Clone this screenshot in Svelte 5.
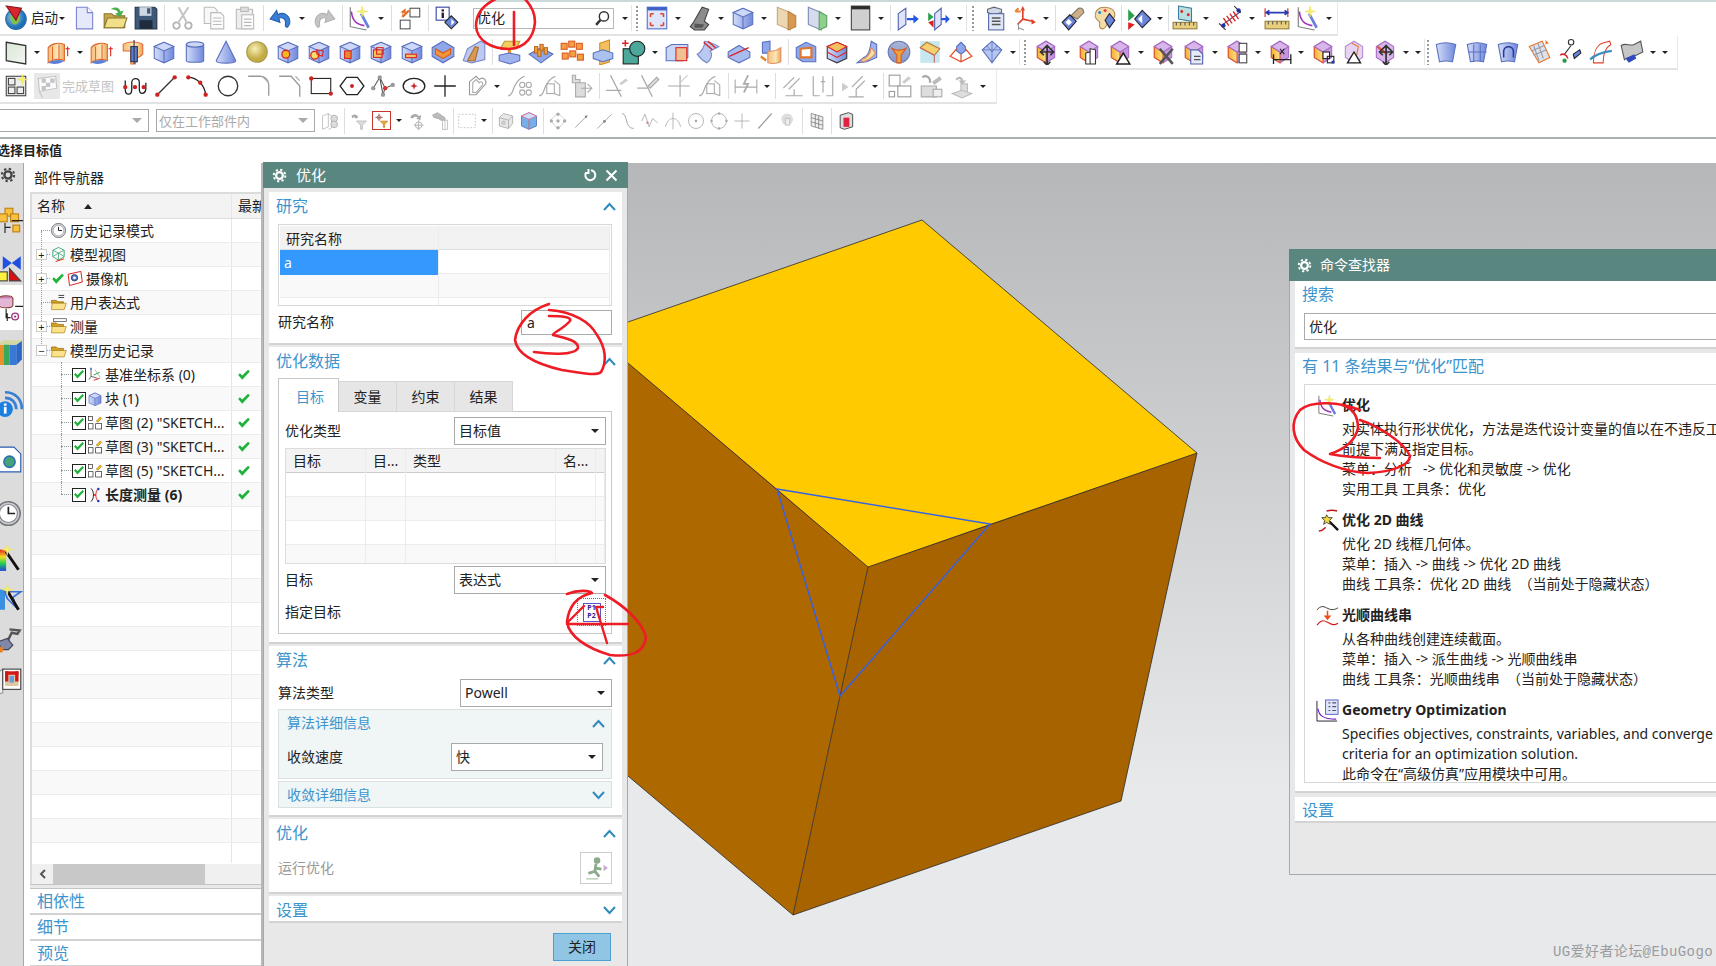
<script>
	// small svg helpers, everything is on a 24x24 box
	const P = (d, f = 'none', s = 'none', w = 1) => `<path d="${d}" fill="${f}" stroke="${s}" stroke-width="${w}"/>`
	const C = (x, y, r, f = 'none', s = 'none', w = 1) => `<circle cx="${x}" cy="${y}" r="${r}" fill="${f}" stroke="${s}" stroke-width="${w}"/>`
	const R = (x, y, w, h, f = 'none', s = 'none') => `<rect x="${x}" y="${y}" width="${w}" height="${h}" fill="${f}" stroke="${s}"/>`

	const cube = P('M3 7l9-4 9 4v11l-9 4-9-4z', 'url(#gBlue)', '#5a70bd') + P('M3 7l9 4 9-4-9-4z', '#cdd8f8', '#5a70bd') + P('M12 11v11', 'none', '#5a70bd')
	const hex = P('M4 7l8-5 8 5v10l-8 5-8-5z', '#c596dc', '#a56cc6') + P('M4 7l8 5v10l-8-5z', 'url(#gYel)', '#e0572a') + P('M4 7l8-5 8 5-8 5z', '#d9b6ea', '#a56cc6')
	const sheet = (l = '') => P('M3 5c6-2 12-2 18 0l-3 16c-4-1-8-1-12 0z', 'url(#gBlue)', '#5a70bd') + l
	const arrows4 = P('M16 9l3 3-3 3M10 15l-3-3 3-3M10 21l3 3 3-3M10 9l3-3 3 3M7 12h12M13 6v18', 'none', '#333', 1.6)
	const star = (x, y) => P(`M${x} ${y - 5}l1 4 4 1-4 1-1 4-1-4-4-1 4-1z`, '#f6f06a', '#e8e060', 0.5)
	const sheetLines = 'M9 5v16M15 5v16M4 12h17'

	const ICONS = {
		tick: P('M2 12l3-3 4 4L19 3l3 3L9 20z', '#1fb33a'),
		logo: C(12, 13, 9.5, 'url(#gGlobe)', '#2c6ea8') + P('M7 9c3-2 4 3 7 1s2 7-2 8-6-5-5-9z', '#7fbf4a') + P('M3 1l14 2-5 11z', '#d8262c', '#8a1216'),
		doc: P('M5 2h10l5 5v15H5z', '#e6e9fb', '#7b83cc') + P('M15 2v5h5', '#fff', '#7b83cc'),
		folder: P('M2 8h7l2 2h10v11H2z', '#c8a94a', '#8a7430') + P('M5 12h18l-3 9H2z', '#f1df8a', '#8a7430') + P('M8 4c4-3 8-2 9 2l3-1-3 6-5-3 3-1c-1-2-4-3-7-3z', '#4aae4a'),
		save: P('M2 2h18l2 2v18H2z', '#3f5878', '#23344a') + R(6, 2, 11, 8, '#cfd8e2') + R(6, 14, 12, 8, '#1f2c3e') + R(13, 3, 3, 5, '#3f5878'),
		scissors: C(6, 19, 3, 'none', '#666', 1.6) + C(17, 19, 3, 'none', '#666', 1.6) + P('M7 17L17 2M16 17L8 2', 'none', '#888', 1.8),
		copy: P('M3 2h9l3 3v12H3z', '#eee', '#777') + P('M9 7h9l3 3v12H9z', '#f6f6f6', '#777') + P('M11 12h8M11 15h8M11 18h8', 'none', '#777'),
		paste: R(4, 4, 15, 18, '#ddd', '#777') + R(8, 2, 7, 4, '#bbb', '#777') + R(9, 9, 11, 13, '#f8f8f8', '#777') + P('M11 13h7M11 16h7M11 19h7', 'none', '#777'),
		undo: P('M20 17c1-8-6-11-11-8l-1-4-6 8 9 3-1-4c4-1 7 1 6 7 1 3 3 1 4-2z', '#3a7fd6', '#245fae'),
		redo: P('M4 17c-1-8 6-11 11-8l1-4 6 8-9 3 1-4c-4-1-7 1-6 7-1 3-3 1-4-2z', '#888', '#666'),
		opt: P('M3 2v18l15 3', 'none', '#777') + P('M4 6c1 9 5 12 12 13', 'none', '#a030c0', 1.5) + P('M13 8l7 13', 'none', '#6a7fe0', 2.5) + star(14, 6),
		windows: R(12, 3, 9, 8, '#fff', '#555') + R(3, 14, 9, 8, '#fff', '#555') + P('M5 12V7h-2l5-4 0 5-2-1-1 5z', '#e06a20') + P('M5 11l6-6', 'none', '#e06a20', 2),
		info: R(2, 2, 12, 12, '#fff', '#3040a0') + R(7, 7, 2.2, 5, '#223') + R(7, 4, 2.2, 2, '#223') + P('M16 10l6 6-6 6-6-6z', '#6a86d8', '#222') + P('M16 13l3 3-3 3z', '#fff'),
		fit: R(3, 2, 18, 20, '#dfe6fb', '#5070c8') + R(3, 2, 18, 3, '#3f62c8') + P('M6 8h3M6 8v3M18 8h-3M18 8v3M6 19h3M6 19v-3M18 19h-3M18 19v-3', 'none', '#e0402a', 1.4),
		shape: P('M6 16l8-14 6 2-4 11 4 3-4 5H7l-4-3z', '#8c8c8c', '#444') + P('M7 17l9 1-2 3H7z', '#555'),
		cube,
		tanplane: P('M4 2l12 5v16L4 18z', '#ecd7b2', '#c4a87a') + P('M14 6l7 4v10l-7 3z', '#d89a50', '#b88040'),
		greenplane: P('M4 2l12 5v16L4 18z', '#d6dcee', '#7a8ab8') + P('M14 6l7 4v10l-7 3z', '#8fd08f', '#5aa05a'),
		winblack: R(4, 1, 17, 22, '#cfcfcf', '#444') + R(4, 1, 17, 3, '#2c2c2c'),
		arrowface: P('M3 8l7-5v15l-7 5z', '#dde4fb', '#5060a8') + P('M11 12h6v-3l5 4-5 4v-3h-6z', '#2454e8'),
		arrowface2: P('M2 7l5 4-5 4z', '#29a04a') + P('M2 16l5-2v7z', '#d22') + P('M8 8l6-5v15l-6 5z', '#dde4fb', '#5060a8') + P('M14 12h4v-3l4 4-4 4v-3h-4z', '#2454e8'),
		list: P('M6 4l6-2 7 2v3l-7 2-6-2z', '#cfd9e8', '#667') + R(7, 8, 14, 15, '#dfe6f5', '#5568a8') + P('M10 12h8M10 15h8M10 18h8', 'none', '#555', 1.4),
		csys: P('M10 13V4M10 13l9 2M10 13l-5 5', 'none', '#e0402a', 1.5) + P('M10 1l-2 4h4zM22 16l-4-3v5z', '#e0402a') + P('M3 6h5M3 6l3-3', 'none', '#ee8030', 2) + P('M6 17v6M6 21l5 2', 'none', '#999'),
		tooldiamond: P('M10 10l7-7c3-1 5 1 5 4l-6 6z', '#cfae88', '#776') + P('M9 9l6 6-7 8-6-7z', '#6a86d8', '#223') + P('M8 13l3 3-3 3-3-3z', '#fff'),
		palette: P('M12 2c-6 0-9 5-8 9 1 3 3 3 4 5 0 2-1 6 3 6 3 0 3-5 6-7 3-1 5-3 5-6 0-5-5-7-10-7z', '#f3dca8', '#b08a50') + C(8, 7, 1.4, '#2a8ad0') + C(13, 5, 1.4, '#e04040') + P('M17 8l5 6-5 7-4-7z', '#6a86d8', '#223'),
		greendiamond: P('M2 4l6 6-6 5z', '#29a04a') + P('M2 16l6 2-6 5z', '#d22') + P('M15 5l8 8-8 8-7-8z', '#6a86d8', '#223') + P('M15 9v8l-4-4z', '#fff'),
		measure: P('M6 1l12 2v12L6 13z', '#b9dfe0', '#3a7f9a') + C(9, 6, 1.3, '#d22') + C(15, 9, 1.3, '#d22') + R(1, 16, 22, 6, '#e8cf7e', '#94803c') + P('M4 16v3M8 16v3M12 16v3M16 16v3M20 16v3', 'none', '#555'),
		hatch: P('M3 19L21 6', 'none', '#446', 1) + P('M5 12l5 7M8 10l5 7M11 8l5 7M14 6l5 7', 'none', '#d22', 1.2) + C(19, 5, 2, '#2030c0') + C(5, 19, 2, '#2030c0') + P('M15 1l6 6M1 17l6 6', 'none', '#333'),
		dimruler: P('M1 3v8M22 3v8', 'none', '#c22') + P('M2 7h20M5 5L2 7l3 2M19 5l3 2-3 2', 'none', '#2a3ab0', 1.5) + R(1, 15, 22, 7, '#e8cf7e', '#94803c') + P('M4 15v3M8 15v3M12 15v3M16 15v3M20 15v3', 'none', '#555'),
		plane: P('M3 3l18 3v17L3 20z', 'url(#gGreen)', '#333', 1.2),
		extrude: P('M2 8c3-4 10-5 15-3v15c-5-2-11-1-15 2z', 'url(#gOr)', '#e06a30') + P('M6 7v13M12 5v15', 'none', '#e06a30') + P('M2 22c4-3 10-3 15-2-4 3-10 4-15 2z', '#5a80d8') + P('M20 7v9M18 9h4', 'none', '#d22'),
		revolve: P('M3 5c4-3 14-3 18 0v9c-2 2-3 3-5 3l-2 6h-4V11H3z', 'url(#gOr)', '#e06a30') + R(10, 7, 6, 14, '#5a80d8', '#334') + P('M13 1v22', 'none', '#334'),
		cyl: P('M4 5v15c0 2 16 2 16 0V5z', 'url(#gBlue)', '#5a70bd') + `<ellipse cx="12" cy="5" rx="8" ry="2.5" fill="#cdd8f8" stroke="#5a70bd"/>`,
		cone: P('M12 2L3 20c0 3 18 3 18 0z', 'url(#gBlue)', '#5a70bd'),
		sphere: C(12, 12, 9.5, 'url(#gSph)', '#a89a50'),
		hole: cube + C(10, 14, 3.6, '#f4b820', '#d22', 1.2),
		boss: cube + C(8, 15, 3.6, '#f4e060', '#d22', 1.2) + P('M10 10l6 1-1 5-5-2z', 'none', '#d22'),
		pocket: cube + R(7, 11, 6, 7, '#e88a30', '#d22'),
		pad: cube + R(5, 10, 8, 7, '#f5c060', '#d22') + R(8, 8, 6, 6, 'none', '#d22'),
		slot: cube + R(6, 14, 10, 3.2, '#f5c060', '#d22'),
		shell: P('M12 2l10 6v8l-10 6-10-6V8z', '#8ea6ea', '#5a70bd') + P('M5 9l7 4 7-4v5l-7 4-7-4z', '#f0963a', '#d85a20'),
		draft: P('M6 9l12-7 4 2v15l-12 3-8-2z', '#bcc9f2', '#7a8ac8') + P('M6 20l7-13 3 1-3 12z', '#d89a50', '#a86a2a'),
		datum: P('M7 2h14l-3 7H3z', '#f0cf60', '#b89a30') + R(10, 9, 3, 6, '#e89030') + P('M2 15l9-2 10 2v5l-9 3-10-3z', '#9eb2ee', '#5a70bd'),
		pad2: P('M1 14l11-6 11 6-11 8z', '#8ea6ea', '#5a70bd') + R(6, 7, 3, 6, '#f0a040', '#b86a20') + R(11, 5, 3, 6, '#f0a040', '#b86a20') + R(15, 8, 3, 6, '#f0a040', '#b86a20') + R(9, 10, 3, 6, '#f0a040', '#b86a20'),
		oranges: [[2, 4], [9, 2], [16, 4], [3, 13], [10, 11], [17, 14]].map(([x, y]) => R(x, y, 5.5, 5.5, '#f5a040', '#d85a20')).join(''),
		planeblock: P('M9 4l9-3v20l-9 3z', '#f4c060', '#d88a20') + P('M3 13l9-3 9 3v5l-9 3-9-3z', '#a9c2f0', '#5a70bd'),
		boolean: R(2, 9, 14, 14, '#4ca89a', '#222') + C(15, 9, 7, '#4ca89a', '#222') + P('M4 1v6M1 4h6', 'none', '#d22', 1.4),
		dashcube: P('M2 8l5-3h15v12l-5 3H2z', '#c9d6f7', '#5a70bd') + R(11, 8, 10, 12, '#f0c090', '#d22'),
		sheetcut: P('M9 2c4 1 9 2 13 5l-8 4c3 4 0 9-3 11-4-2-7-5-9-8 4-2 7-7 7-12z', '#b9c9f2', '#7a8ac8') + P('M8 3l8 7M12 2l7 6', 'none', '#d22', 1.3),
		slab: P('M2 12l10-6 10 6v5l-10 5-10-5z', '#a9bcf0', '#5a70bd') + P('M3 16l18-8', 'none', '#d22', 1.2),
		wrap: P('M5 3l7-1v11H5z', '#8ea6ea', '#5a70bd') + P('M10 11c4 1 8 0 12-3v13c-4 2-8 2-12 1z', 'url(#gOr)', '#e09060') + P('M4 15l5 4-1 2-5-4z', '#e8802a'),
		frame: P('M3 8l9-5 9 4v14H9L3 17z', '#8ea6ea', '#5a70bd') + P('M7 9l10-1v9H7z', '#fff', '#e0762a', 2),
		boxred: P('M3 7l9-4 9 4v11l-9 4-9-4z', 'url(#gBlue)', '#333') + P('M3 7l9-4 9 4-9 5z', '#f5c060', '#d22') + P('M3 12l9 5 9-5', 'none', '#d22'),
		leaf: P('M15 2l5 3v12l-9 4-9 1 6-5c5-2 6-8 7-15z', '#9eb2ee', '#5a70bd') + P('M6 19c5-1 8-5 9-11l4 5c-3 4-7 7-12 8z', '#f5e0a0', '#e09060'),
		funnel: C(12, 12, 10, 'url(#gGray)', '#6a7ab0') + P('M5 8c3 3 11 3 14 0l-5 7v7h-4v-7z', '#f0a040', '#d85a20'),
		slab2: R(3, 2, 18, 20, '#c6e6f0') + P('M3 8l6-5 12 6-5 6z', '#f5d070', '#b87a30') + P('M3 8l13 7v7', 'none', '#c66'),
		pyra: P('M12 3l4 4v4l-4 3-4-3V7z', '#8ea6ea', '#5a70bd') + P('M8 9l-6 7 10 5 10-5-6-7M12 14v7', 'none', '#e05030', 1.1),
		gem: P('M12 2l9 8-9 12L3 10z', '#b6c6f2', '#5a70bd') + P('M3 10h18M12 2v20M7 6l5 6 5-6', 'none', '#5a70bd', 0.7),
		hexmove: hex + arrows4,
		hexdoc: hex + P('M13 9l5 1v13h-5zM9 13l4-1v11H9z', '#fff', '#333'),
		hextri: hex + P('M9 23l6-10 6 10z', '#fff', '#222', 1.4),
		hexx: hex + P('M9 9l12 14M21 9L9 23', 'none', '#555', 2.4),
		hexcopy: hex + P('M9 10h7l4 4v9H9z', '#e6e9fb', '#5060a8') + P('M12 16h6M12 19h6', 'none', '#555'),
		hexsplit: hex + R(14, 4, 7, 8, '#fff', '#444') + R(14, 14, 7, 8, '#fff', '#444'),
		hexdim: hex + P('M6 14v9M22 14v9M6 19h16', 'none', '#222', 1.2) + P('M12 9l4 5M16 9l-4 5', 'none', '#222'),
		hexpat: hex + R(12, 12, 6, 6, '#fff', '#222') + R(16, 16, 6, 6, 'none', '#222') + R(20, 20, 2.5, 2.5, '#2030c0'),
		hexghost: P('M4 7l8-5 8 5v10l-8 5-8-5z', '#e6d4f0', '#b98ad4') + P('M10 4l6 3-2 10', 'none', '#e8762a') + P('M6 22l6-10 6 10z', '#fff', '#222', 1.3),
		hexline: P('M4 7l8-5 8 5v10l-8 5-8-5z', '#d9b6ea', '#a56cc6') + P('M5 7l9 7', 'none', '#e8502a', 2) + arrows4,
		surf1: sheet(),
		surf2: sheet(P(sheetLines, 'none', '#5a70bd')),
		surf3: sheet(P('M8 17v-6c1-5 8-5 9 0v6', 'none', '#2a3a90', 1.4)),
		surf4: P('M3 7l12-5 7 15-10 5z', '#dde2ea', '#e8762a') + P('M7 6l5 14M11 4l5 14M5 11l12-5M7 15l12-5', 'none', '#99a') + P('M18 1l3 3-3 1z', '#e8762a'),
		surf5: C(13, 3, 2.5, '#fff', '#333') + P('M13 6l-6 8', 'none', '#333') + P('M15 14l6-4 1 3-6 5z', '#6a86d8', '#223') + C(7, 20, 2, '#2a9a4a') + P('M3 15c2-2 6-1 7 3', 'none', '#d22', 1.4),
		surf6: P('M5 22c0-9 3-16 8-18l7-2 1 3c-5 3-7 8-7 17z', '#fff', '#e0402a') + P('M2 19c5-5 12-7 20-8', 'none', '#3a8fc0', 2),
		surf7: P('M2 6c5-3 8 1 12-1l6-3 2 10-8 4c-3 1-6 0-9 3z', '#c6c6c6', '#555') + P('M6 18l8-4 2 4-7 4z', '#3048c0'),
		sketch: R(3, 3, 18, 18, '#eee', '#444', 1.5) + R(5, 5, 6, 6, 'none', '#444') + R(13, 13, 6, 6, 'none', '#444') + R(5, 13, 6, 6, 'none', '#444') + star(18, 6),
		flag: R(0, 0, 24, 24, '#d0d0d0') + P('M4 5l16-2 1 11-16 3zM5 17l3 6', '#f6f6f6', '#888') + P('M7 5h4v4H7zM15 5h4v4h-4zM11 9h4v4h-4zM7 12h4v4H7z', '#888'),
		studio: P('M3 7v8c0 6 6 6 6 0V9c0-5 7-5 7 0v6c0 5 5 5 6 0V9', 'none', '#222', 1.2) + C(3, 13, 2, '#c22') + C(12, 13, 2, '#c22') + C(20, 13, 2, '#c22'),
		line: P('M4 20L20 4', 'none', '#333', 1.2) + C(4, 20, 2, '#c22') + C(20, 4, 2, '#c22'),
		arc: P('M4 4c8 0 15 7 16 16', 'none', '#222', 1.2) + C(4, 4, 2, '#c22') + C(20, 20, 2, '#c22') + C(15, 9, 2, '#c22'),
		circle: C(12, 12, 9, 'none', '#333', 1.2),
		fillet: P('M2 3h11c5 0 8 4 8 8v10', 'none', '#999', 1.2) + P('M15 3l6 6', 'none', '#aaa', 1),
		chamfer: P('M2 3h11l8 9v10', 'none', '#999', 1.2) + P('M17 3l4 4', 'none', '#aaa', 1),
		rect: R(3, 5, 18, 14, 'none', '#222') + C(3, 5, 2, '#c22') + C(21, 19, 2, '#c22'),
		polygon: P('M7 4h10l6 8-6 8H7l-6-8z', 'none', '#222', 1.2) + C(12, 12, 1.8, '#c22'),
		spline: P('M3 14L9 4l5 10 7-3M14 14l-2 6-3-16', 'none', '#555', 1) + C(9, 4, 2, '#999') + C(3, 14, 2, '#999') + C(14, 14, 2, '#c33') + C(21, 11, 2, '#999') + C(12, 20, 2, '#999'),
		ellipse: `<ellipse cx="12" cy="12" rx="10" ry="7" fill="none" stroke="#222" stroke-width="1.2"/>` + C(12, 12, 1.6, '#c22') + P('M12 9v6M9 12h6', 'none', '#c22', 0.8),
		plus: P('M12 2v20M2 12h20', 'none', '#222', 1.2),
		offset: P('M6 20V8l6-5 3 3c3-3 7 0 6 4l-9 10z', 'none', '#999', 1) + P('M9 18V9l3-3 3 3c2-2 4 0 3 2l-6 7z', 'none', '#aaa', 1),
		trim1: P('M2 21c4 0 4-5 6-9s4-7 9-9', 'none', '#aaa', 1.2) + C(15, 11, 2.4, 'none', '#aaa') + C(21, 11, 2.4, 'none', '#aaa') + C(15, 18, 2.4, 'none', '#aaa') + C(21, 18, 2.4, 'none', '#aaa'),
		trim2: P('M2 21c4 0 4-5 6-9s4-7 9-9', 'none', '#aaa', 1.2) + R(9, 10, 7, 9, 'none', '#aaa') + P('M16 7l5 4v10l-5-2', 'none', '#aaa'),
		can: P('M4 2h3v4h4v3H4zM7 9h9v13H7z', '#ddd', '#aaa') + P('M18 10l4 4-4 4M12 14h9', 'none', '#aaa'),
		cross1: P('M6 2l10 20M2 16h14', 'none', '#aaa', 1.2) + P('M14 10l6-5 2 2-6 4z', '#ccc'),
		cross2: P('M6 2l10 20M2 14h10', 'none', '#aaa', 1.2) + P('M12 12l8-8 2 2-8 8z', '#ddd', '#aaa'),
		cross3: P('M13 2v20M2 12h20', 'none', '#aaa', 1.1) + P('M12 10l8-8', 'none', '#ccc', 1),
		dim1: P('M2 6v13M22 6v13M2 13h20', 'none', '#aaa') + P('M14 2l-4 8h4l-4 8', 'none', '#aaa', 1.6),
		par: P('M4 14L14 4M9 15L19 5M6 21h16M14 15v6', 'none', '#aaa', 1.1),
		perp: P('M3 3v18M21 3v18M3 21h6M15 21h6M10 8h4M12 3v15', 'none', '#aaa', 1.1),
		angle: P('M1 9l6 4-6 4z', '#ccc') + P('M10 13L20 3M14 15L22 7M7 22h14M14 15v7', 'none', '#aaa', 1.1),
		squares: R(2, 2, 10, 10, '#fff', '#999') + R(10, 12, 12, 10, '#fff', '#999') + R(2, 17, 5, 5, '#fff', '#999') + P('M14 8l6-5 2 2-6 5z', '#ccc'),
		gears: P('M3 12h14v10H3z', '#ddd', '#aaa') + P('M4 4c4-3 8 1 7 5', 'none', '#aaa', 2) + P('M13 8l7-5 2 3-7 5z', '#bbb') + R(14, 15, 8, 7, '#eee', '#aaa'),
		lamp: P('M6 6c2-4 7-3 7 1l3 0-4 4-3-4h2c0-2-3-2-3 0z', '#bbb') + R(11, 10, 6, 8, '#ddd', '#bbb') + P('M3 19l9-3 9 3-9 4z', '#ddd', '#bbb'),
		mini1: P('M3 6l7-3v16l-7 3zM10 3l4 3v14l-4 2', 'none', '#bbb') + C(17, 9, 4, '#ddd', '#aaa') + C(17, 16, 4, '#ddd', '#aaa'),
		filt1: P('M3 6c3-3 7-2 8 2l-3 1c-1-2-3-2-4 0z', '#aaa') + P('M9 12h12l-5 5v5h-2v-5z', '#ddd', '#bbb'),
		filt2: P('M2 7h12M8 1v12', 'none', '#444', 1) + C(8, 7, 3, 'none', '#c22') + P('M10 13h12l-5 5v5h-2v-5z', '#f0a830', '#b87a10'),
		filt3: P('M4 8c1-5 8-6 10-2l3-1-1 6-5-2 2-1c-2-2-5-1-6 1z', '#aaa') + C(14, 17, 4, 'none', '#aaa') + P('M14 11v12M8 17h12', 'none', '#aaa'),
		filt4: P('M3 5l6-3 6 4 3 2v3h-5l-3-2-5-1z', '#bbb', '#aaa') + R(15, 11, 6, 11, 'none', '#bbb') + P('M18 11v11', 'none', '#bbb'),
		selrect: `<rect x="2" y="4" width="20" height="16" fill="none" stroke="#777" stroke-dasharray="2 2"/>`,
		smallcube: P('M4 8l5-5 11 3v9l-5 6-11-3z', '#e8e8e8', '#aaa') + P('M4 8l11 3v10M15 11l5-5', 'none', '#aaa') + C(9, 14, 3, '#ccc'),
		smallblue: P('M3 6l9-4 9 4v12l-9 4-9-4z', '#78aee8', '#5a70bd') + P('M3 6l9 4 9-4-9-4z', '#cde0f8', '#e07090') + P('M12 10v12', 'none', '#c66'),
		pts: P('M12 2l9 9-9 11-9-11z', 'none', '#ccc') + C(12, 4, 2, '#aaa') + C(4, 12, 2, '#aaa') + C(20, 12, 2, '#aaa') + C(12, 20, 2, '#aaa') + C(12, 12, 2, '#aaa'),
		snapl: P('M5 20L20 5', 'none', '#aaa', 1.2) + C(18, 7, 1.5, '#888'),
		snapm: P('M4 21L21 4', 'none', '#aaa', 1.2) + C(12.5, 12.5, 1.7, '#888'),
		snapc: P('M6 3c7 0 3 18 14 18', 'none', '#aaa', 1.2),
		snapw: P('M2 12l4-8 5 15 4-10 6 5', 'none', '#aaa') + C(9, 14, 1.5, '#c88'),
		snapt: P('M12 2v20M3 19c1-6 5-10 9-10s8 4 9 10', 'none', '#aaa'),
		snapo: C(12, 12, 9, 'none', '#aaa') + C(12, 12, 1.6, '#aaa'),
		snapo2: C(12, 12, 9, 'none', '#aaa') + C(12, 3, 1.5, '#aaa') + C(12, 21, 1.5, '#aaa') + C(3, 12, 1.5, '#aaa') + C(21, 12, 1.5, '#aaa'),
		snapp: P('M12 3v18M3 12h18', 'none', '#aaa'),
		snapsl: P('M4 21L20 3', 'none', '#999', 1.4),
		snapg: C(11, 10, 7, '#ddd') + P('M9 9h5v8H9z', '#eee', '#bbb'),
		grid: P('M5 3l14 4v15L5 18zM5 8l14 4M5 13l14 4M10 4v15M14 6v15', '#eee', '#777', 0.9),
		redcube: P('M5 5l10-3 5 2v15l-10 3-5-2z', '#ddd', '#333') + R(9, 8, 7, 11, '#e02040'),
		clock: C(12, 12, 10, '#d9dde6', '#777', 1.4) + C(12, 12, 7.5, '#fff', '#999') + P('M12 7v5h5', 'none', '#222', 1.4),
		view: P('M4 6l8-4 8 4v9l-8 5-8-5z', 'none', '#2aa06a', 1.2) + P('M4 6l8 4 8-4M12 10v10M4 15l8-5 8 5', 'none', '#2aa06a', 1) + P('M8 22l12-4', 'none', '#e0402a', 1.6),
		cam: P('M3 6l18-4 2 15-18 5z', '#fff', '#d22', 1.4) + C(12, 11, 4.5, '#5a78d0', '#222') + C(12, 11, 2, '#fff'),
		expr: P('M2 9h7l2 2h8v2H2z', '#d4a020', '#8a6a10') + P('M3 13h20l-3 9H2z', '#fbe28a', '#a8841c') + P('M12 2h8M12 5h8', 'none', '#334', 1.3),
		fold: P('M2 7h7l2 2h8v3H2z', '#d4a020', '#8a6a10') + P('M3 12h20l-3 9H2z', '#fbe28a', '#a8841c'),
		ruler: P('M2 7h7l2 2h8v3H2z', '#d4a020', '#8a6a10') + P('M3 12h20l-3 9H2z', '#fbe28a', '#a8841c') + R(5, 1, 18, 4, '#fff', '#445'),
		csysSm: P('M6 4v10M6 14l10 3M6 14l-3 5', 'none', '#222') + P('M5 1h2v3H5z', '#2030c0') + P('M12 4l8 12', 'none', '#6a7') + P('M10 12l9-4', 'none', '#2a9a4a', 1.4) + P('M10 20l9-3', 'none', '#d22', 1.4),
		sketchSm: R(2, 2, 6, 6, '#fff', '#222', 1.4) + R(2, 13, 7, 8, '#fff', '#222') + R(13, 13, 9, 8, '#fff', '#222') + P('M14 9l6-6 2 2-6 6z', '#f4c020', '#a88010'),
		meas: P('M6 2c5 5 5 15 0 20', 'none', '#222', 1.4) + P('M17 2c-5 5-5 15 0 20', 'none', '#d22', 1.4) + C(17, 3, 1.8, '#2030c0') + C(12, 12, 1.5, '#d22') + C(17, 21, 1.8, '#2030c0'),
		railparts: [[8, 2], [3, 7], [13, 7]].map(([x, y]) => R(x, y, 7, 7, '#f6c040', '#c08010')).join('') + P('M8 15v9M8 19h5M14 13h10', 'none', '#222') + R(15, 17, 6, 6, '#f6c040', '#c08010'),
		railasm: P('M6 1l8 6 8-6v12l-8-6-8 6z', '#2050e0') + R(0, 15, 10, 8, '#fff040', '#444') + P('M12 23V12l10 11z', '#d81010', '#444'),
		raildb: `<ellipse cx="9" cy="4" rx="6" ry="2.5" fill="#c880b8" stroke="#843"/>` + P('M3 4v6c0 3 12 3 12 0V4', '#e3b6d8', '#843') + P('M10 17v7M9 13v8h4M17 11h7', 'none', '#222') + C(17, 20, 3, 'none', '#a03080', 1.2) + C(17, 20, 1, '#a03080'),
		railbooks: R(1, 6, 6, 18, '#e8902a') + R(7, 4, 5, 20, '#3aa85a') + R(12, 6, 6, 18, '#3a78d8') + P('M18 6l5-4v17l-5 5z', '#2a68c8') + P('M1 6l5-4h18l-6 4z', '#d4d8a0'),
		railinfo: P('M8 7c6 0 10 4 10 10M8 2c9 0 15 6 15 15', 'none', '#3a7fd6', 2.4) + C(8, 17, 7, '#1a7fe0') + R(7, 15, 2.4, 6, '#fff') + R(7, 12, 2.4, 2, '#fff'),
		raildoc: P('M3 1h13l6 6v16H3z', '#fff', '#2a5ab0') + C(12, 14, 5, '#48a078', '#2a70b0', 1.4),
		railclock: C(11, 12, 10.5, '#c8ccd6', '#777', 1.4) + C(11, 12, 8, '#fff', '#888') + P('M11 6v6h6', 'none', '#222', 1.5),
		railrainbow: R(0, 4, 9, 19, 'url(#gRain)') + P('M9 6l11 16', 'none', '#111', 2.6) + star(10, 4),
		railblue: P('M2 4h6v18H2z', '#3a8fe0') + P('M8 6h14l-7 5 3 9-8-8z', 'none', '#3a70d8', 1.5) + P('M10 5l10 17', 'none', '#111', 2.6) + star(10, 4),
		railhammer: P('M12 3l9 1-2 3-5-1-5 10', 'none', '#555', 2.2) + P('M2 14l8-3 5 6-4 4H5z', '#8088a8', '#445') + C(4, 21, 2.5, '#e8802a'),
		railcurtain: P('M0 5l6-4v21l-6 2z', '#eee', '#999') + R(6, 1, 16, 18, '#fff', '#444') + R(8, 3, 12, 13, '#e0c8a0') + R(8, 3, 12, 3, '#d01818') + R(8, 3, 3, 9, '#d01818') + R(17, 3, 3, 9, '#d01818') + R(12, 7, 4, 6, '#60a0e0'),
		wand: P('M3 23c4 0 5-2 7-4M11 2c4-1 8-1 11 0', 'none', '#c01818', 1.6) + P('M14 13l9 9', 'none', '#111', 2.4) + P('M11 6l2 3 4 0-3 3 1 4-4-2-3 2 1-4-3-3 4 0z', '#f6d840', '#222', 0.8),
		smooth: P('M1 6c4-4 6-4 10-2s7 3 12 0', 'none', '#333') + P('M12 7v7', 'none', '#e8501a', 1.6) + P('M8 12h8l-4 5z', '#e8501a') + P('M1 22c5-6 7-5 11-3s6 4 11 1', 'none', '#d01818', 1.2),
		geo: P('M1 2v21h21', 'none', '#223', 1) + P('M2 10c1 7 5 11 19 11', 'none', '#7020c0', 1.2) + R(10, 1, 13, 15, '#dfe6fb', '#5a60c8') + P('M13 4h2M17 4h4M13 8h2M17 8h4M13 12h2M17 12h4', 'none', '#556', 1.2),
		run: C(13, 5, 3, '#8caa8c') + P('M12 8l-1 7-6 2M11 12l6 1M11 15l4 5', 'none', '#8caa8c', 2.6) + P('M19 9l4 3-4 3z', '#c8a8d0') + P('M3 22h11', 'none', '#bcd0bc', 1.4)
	}

	// tokens: v caret, |n separator, _n spacer, ^n grip, @text, ! dims the icon
	function parse(s) {
		return s.split(' ').map((t) => {
			if (t === 'v') return { t: 'v' }
			if (t[0] === '|') return { t: 'sep', w: +t.slice(1) || 6 }
			if (t[0] === '_') return { t: 'gap', w: +t.slice(1) }
			if (t[0] === '^') return { t: 'grip', w: +t.slice(1) }
			if (t[0] === '@') return { t: 'txt', v: t.slice(1) }
			if (t[0] === '~') return { t: 'off', v: t.slice(1) }
			if (t[0] === '#') return { t: t.slice(1) }
			return { t: 'i', k: t.replace('!', ''), dim: t.endsWith('!') }
		})
	}

	const toolbars = [
		{ w: 1338, items: parse('logo @启动 v doc folder save |6 scissors! copy! paste! |5 undo v redo! |5 opt v |7 windows |6 info #search v ^9 fit v shape v cube v tanplane greenplane v winblack v |5 arrowface arrowface2 v ^11 list csys v |5 tooldiamond palette |4 greendiamond v |3 measure v _3 hatch v _3 dimruler opt v') },
		{ w: 1678, items: parse('plane v extrude v extrude revolve cube cyl cone sphere hole boss pocket pad slot shell draft |5 datum pad2 oranges planeblock boolean v dashcube sheetcut slab wrap |5 frame boxred leaf funnel slab2 pyra gem v ^10 hexmove v hexdoc hextri v hexx hexcopy v hexsplit v hexdim v hexpat hexghost hexline v v ^5 surf1 surf2 surf3 surf4 surf5 surf6 surf7 v v') },
		{ w: 997, items: parse('sketch flag! ~完成草图 studio line arc circle fillet chamfer rect polygon spline ellipse plus offset v trim1 trim2 can |5 cross1 cross2 cross3 trim2 |5 dim1 v |3 par perp angle v |3 squares gears lamp v') }
	]
	const row4 = parse('#c1 #c2 _3 mini1 |6 filt1 #fbox v filt3 filt4 |4 selrect! v |4 smallcube smallblue |6 pts snapl snapm snapc snapw snapt snapo snapo2 snapp snapsl snapg |6 grid |6 redcube')

	const rail = [
		['gear', 24], ['railparts', 64], ['railasm', 34], ['raildb', 45, true], ['railbooks', 43], ['railinfo', 60],
		['raildoc', 52], ['railclock', 56], ['railrainbow', 34], ['railblue', 46], ['railhammer', 36], ['railcurtain', 48]
	]

	const tree = [
		{ icon: 'clock', text: '历史记录模式' },
		{ tog: '+', icon: 'view', text: '模型视图' },
		{ tog: '+', tick: true, icon: 'cam', text: '摄像机' },
		{ icon: 'expr', text: '用户表达式' },
		{ tog: '+', icon: 'ruler', text: '测量' },
		{ tog: '−', icon: 'fold', text: '模型历史记录' },
		{ kid: true, icon: 'csysSm', text: '基准坐标系 (0)' },
		{ kid: true, icon: 'cube', text: '块 (1)' },
		{ kid: true, icon: 'sketchSm', text: '草图 (2) "SKETCH...' },
		{ kid: true, icon: 'sketchSm', text: '草图 (3) "SKETCH...' },
		{ kid: true, icon: 'sketchSm', text: '草图 (5) "SKETCH...' },
		{ kid: true, last: true, icon: 'meas', text: '长度测量 (6)', bold: true }
	]
	const blanks = Array(15).fill(0)

	const results = [
		{ icon: 'opt', title: '优化', lines: ['对实体执行形状优化，方法是迭代设计变量的值以在不违反工', '前提下满足指定目标。', '菜单：分析 &nbsp; -> 优化和灵敏度 -> 优化', '实用工具 工具条：优化'] },
		{ icon: 'wand', title: '优化 2D 曲线', lines: ['优化 2D 线框几何体。', '菜单：插入 -> 曲线 -> 优化 2D 曲线', '曲线 工具条：优化 2D 曲线 &nbsp;（当前处于隐藏状态）'] },
		{ icon: 'smooth', title: '光顺曲线串', lines: ['从各种曲线创建连续截面。', '菜单：插入 -> 派生曲线 -> 光顺曲线串', '曲线 工具条：光顺曲线串 &nbsp;（当前处于隐藏状态）'] },
		{ icon: 'geo', title: 'Geometry Optimization', lines: ['Specifies objectives, constraints, variables, and converge', 'criteria for an optimization solution.', '此命令在“高级仿真”应用模块中可用。'] }
	]
</script>

{#snippet ic(kind, size = 26, dim = false)}
	<svg class:dim width={size} height={size} viewBox="0 0 24 24">{@html ICONS[kind]}</svg>
{/snippet}

{#snippet gear(size = 16, color = '#fff')}
	<svg width={size} height={size} viewBox="0 0 16 16" fill="none" stroke={color}>
		<circle cx="8" cy="8" r="3.6" stroke-width="2.4" />
		<circle cx="8" cy="8" r="6.2" stroke-width="2" stroke-dasharray="2.4 2.47" />
	</svg>
{/snippet}

{#snippet chev(up = true)}
	<svg class="chev" width="13" height="9" viewBox="0 0 13 9" fill="none" stroke="#2f8abf" stroke-width="2">
		<path d={up ? 'M1 8l5.5-6L12 8' : 'M1 1l5.5 6L12 1'} />
	</svg>
{/snippet}

{#snippet combo(label, cls = '')}
	<div class="combo {cls}"><span>{label}</span><i class="tri"></i></div>
{/snippet}

{#snippet tools(items)}
	{#each items as it}
		{#if it.t === 'i'}
			<div class="cell">{@render ic(it.k, 26, it.dim)}</div>
		{:else if it.t === 'v'}
			<div class="caret"><i class="tri small"></i></div>
		{:else if it.t === 'sep'}
			<div class="sep" style:width="{it.w}px"></div>
		{:else if it.t === 'gap'}
			<div style:width="{it.w}px"></div>
		{:else if it.t === 'grip'}
			<div class="grip" style:width="{it.w}px"></div>
		{:else if it.t === 'txt'}
			<div class="tb-txt">{it.v}</div>
		{:else if it.t === 'off'}
			<div class="tb-off">{it.v}</div>
		{:else if it.t === 'search'}
			<div class="search">
				<span>优化</span>
				<svg width="17" height="17" viewBox="0 0 24 24" fill="none" stroke="#333" stroke-width="2"><circle cx="14" cy="9" r="6.5" /><path d="M9 14l-6 7" stroke-width="3.4" /></svg>
			</div>
		{:else if it.t === 'c1'}
			<div class="filter-combo first"><i class="tri pale"></i></div>
		{:else if it.t === 'c2'}
			<div class="filter-combo second"><span>仅在工作部件内</span><i class="tri pale"></i></div>
		{:else if it.t === 'fbox'}
			<div class="cell"><div class="fbox">{@render ic('filt2', 15)}</div></div>
		{/if}
	{/each}
{/snippet}

<div class="app">
	<svg class="defs" width="0" height="0">
		<defs>
			<linearGradient id="gBlue" x1="0" x2="1" y1="0" y2="0"><stop offset="0" stop-color="#d3ddf9" /><stop offset="1" stop-color="#7188dc" /></linearGradient>
			<linearGradient id="gOr" x1="0" x2="1" y1="0" y2="0"><stop offset="0" stop-color="#f7c07a" /><stop offset="0.6" stop-color="#fbe6b8" /><stop offset="1" stop-color="#efa458" /></linearGradient>
			<linearGradient id="gYel" x1="0" x2="1" y1="0" y2="0"><stop offset="0" stop-color="#f6b030" /><stop offset="1" stop-color="#fbe28a" /></linearGradient>
			<linearGradient id="gGreen" x1="0" x2="1" y1="0" y2="1"><stop offset="0" stop-color="#d9e6d8" /><stop offset="1" stop-color="#f4f6f0" /></linearGradient>
			<linearGradient id="gGray" x1="0" x2="0" y1="0" y2="1"><stop offset="0" stop-color="#aab4d8" /><stop offset="1" stop-color="#8896c8" /></linearGradient>
			<radialGradient id="gSph" cx="0.4" cy="0.35"><stop offset="0" stop-color="#f7efb8" /><stop offset="1" stop-color="#c2ab42" /></radialGradient>
			<radialGradient id="gGlobe" cx="0.4" cy="0.4"><stop offset="0" stop-color="#9ad0f0" /><stop offset="1" stop-color="#1f6fb8" /></radialGradient>
			<linearGradient id="gRain" x1="0" x2="0" y1="0" y2="1"><stop offset="0" stop-color="#e82020" /><stop offset="0.35" stop-color="#f0e020" /><stop offset="0.65" stop-color="#20d050" /><stop offset="1" stop-color="#2040e0" /></linearGradient>
		</defs>
	</svg>

	<header class="toolbars">
		{#each toolbars as bar}
			<div class="tb" style:width="{bar.w}px">{@render tools(bar.items)}</div>
		{/each}
		<div class="tb tb4">{@render tools(row4)}</div>
	</header>

	<div class="status">选择目标值</div>

	<div class="main">
		<nav class="rail">
			{#each rail as [kind, h, on]}
				<div class="slot" class:on style:height="{h}px">
					{#if kind === 'gear'}{@render gear(16, '#444')}{:else}{@render ic(kind, 27)}{/if}
				</div>
			{/each}
		</nav>

		<aside class="nav">
			<div class="nav-title">部件导航器</div>
			<div class="nav-table">
				<div class="nav-head">
					<div class="c-name">名称<i class="tri up"></i></div>
					<div class="c-new">最新</div>
				</div>
				<div class="nav-rows">
					{#each tree as row}
						<div class="nrow">
							<div class="c-name" class:kid={row.kid} class:last={row.last} class:root={!row.kid}>
								{#if row.kid}
									<span class="cbox">{@render ic('tick', 13)}</span>
									<span class="k-ico">{@render ic(row.icon, 16)}</span>
								{:else}
									{#if row.tog}<span class="tog">{row.tog}</span>{:else}<span class="tog none"></span>{/if}
									{#if row.tick}<span class="r-tick">{@render ic('tick', 14)}</span>{/if}
									<span class="r-ico">{@render ic(row.icon, 17)}</span>
								{/if}
								<span class="lbl" class:bold={row.bold}>{row.text}</span>
							</div>
							<div class="c-new">{#if row.kid}{@render ic('tick', 14)}{/if}</div>
						</div>
					{/each}
					{#each blanks as _}
						<div class="nrow"><div class="c-name"></div><div class="c-new"></div></div>
					{/each}
				</div>
				<div class="hscroll">
					<span class="sb-arrow">
						<svg width="8" height="10" viewBox="0 0 8 10" fill="none" stroke="#555" stroke-width="2"><path d="M6 1L2 5l4 4" /></svg>
					</span>
					<span class="sb-thumb"></span>
				</div>
			</div>
			<div class="splitter"></div>
			<div class="nav-sec">相依性</div>
			<div class="nav-sec">细节</div>
			<div class="nav-sec">预览</div>
		</aside>

		<section class="dialog">
			<div class="d-title">
				{@render gear(15)}
				<span class="d-name">优化</span>
				<svg class="d-btn" width="14" height="14" viewBox="0 0 14 14" fill="none" stroke="#fff" stroke-width="2"><path d="M8 2.2a5 5 0 1 1-5 2.4M5.5 1v4h-3" /></svg>
				<svg class="d-btn" width="13" height="13" viewBox="0 0 13 13" fill="none" stroke="#fff" stroke-width="2"><path d="M1.5 1.5l10 10M11.5 1.5l-10 10" /></svg>
			</div>
			<div class="d-body">
				<div class="sec s1">
					<div class="sec-h"><span>研究</span>{@render chev()}</div>
					<div class="study">
						<div class="study-row head"><div>研究名称</div><div></div></div>
						<div class="study-row"><div class="sel">a</div><div></div></div>
						<div class="study-row alt"><div></div><div></div></div>
						<div class="study-row"><div></div><div></div></div>
					</div>
					<div class="field name-field">
						<span>研究名称</span>
						<div class="input">a</div>
					</div>
				</div>

				<div class="sec s2">
					<div class="sec-h"><span>优化数据</span>{@render chev()}</div>
					<div class="tabs">
						<div class="tab on">目标</div>
						<div class="tab">变量</div>
						<div class="tab">约束</div>
						<div class="tab">结果</div>
					</div>
					<div class="panel">
						<div class="field p-row">
							<span>优化类型</span>
							{@render combo('目标值')}
						</div>
						<div class="goals">
							<div class="g-row g-head"><div>目标</div><div>目...</div><div>类型</div><div>名...</div><div></div></div>
							{#each [0, 1, 2, 3] as i}
								<div class="g-row" class:alt={i % 2 === 1}><div></div><div></div><div></div><div></div><div></div></div>
							{/each}
						</div>
						<div class="field p-row">
							<span>目标</span>
							{@render combo('表达式')}
						</div>
						<div class="field p-row pick">
							<span>指定目标</span>
							<div class="pick-btn"><div class="pick-in"><b>P1</b><b>P2</b></div></div>
						</div>
					</div>
				</div>

				<div class="sec s3">
					<div class="sec-h"><span>算法</span>{@render chev()}</div>
					<div class="field alg">
						<span>算法类型</span>
						{@render combo('Powell')}
					</div>
					<div class="group open">
						<div class="g-title"><span>算法详细信息</span>{@render chev()}</div>
						<div class="field speed">
							<span>收敛速度</span>
							{@render combo('快')}
						</div>
					</div>
					<div class="group">
						<div class="g-title"><span>收敛详细信息</span>{@render chev(false)}</div>
					</div>
				</div>

				<div class="sec s4">
					<div class="sec-h"><span>优化</span>{@render chev()}</div>
					<div class="field run">
						<span>运行优化</span>
						<div class="run-btn">{@render ic('run', 26)}</div>
					</div>
				</div>

				<div class="sec s5">
					<div class="sec-h"><span>设置</span>{@render chev(false)}</div>
				</div>

				<div class="d-foot"><button class="close">关闭</button></div>
			</div>
		</section>

		<main class="view">
			<!-- model and hand drawn marks use page coordinates -->
			<svg class="model" viewBox="628 163 1088 803" width="1088" height="803">
				<polygon points="628,322 922,220 1197,453 990,524 868,567 777,489 628,363" fill="#ffcb00" />
				<polygon points="628,363 777,489 868,567 840,696 793,915 628,776" fill="#ad6800" />
				<polygon points="868,567 990,524 1197,453 1121,801 793,915 840,696" fill="#a66300" />
				<path d="M628 322L922 220L1197 453L1121 801L793 915L628 776M628 363L868 567L840 696L793 915M868 567L1197 453" fill="none" stroke="#2a2a2a" stroke-width="0.8" />
				<path d="M777 489L990 524L840 696Z" fill="none" stroke="#3560e8" stroke-width="1.4" />
			</svg>

			<div class="finder">
				<div class="f-title">{@render gear(15)}<span>命令查找器</span></div>
				<div class="f-body">
					<div class="f-sec f-search">
						<div class="f-h">搜索</div>
						<div class="f-input">优化</div>
					</div>
					<div class="f-sec f-list">
						<div class="f-h">有 11 条结果与“优化”匹配</div>
						<div class="f-box">
							{#each results as r}
								<div class="res">
									<div class="res-ico">{@render ic(r.icon, 23)}</div>
									<div>
										<div class="res-t">{r.title}</div>
										{#each r.lines as l}<div class="res-l">{@html l}</div>{/each}
									</div>
								</div>
							{/each}
						</div>
					</div>
					<div class="f-sec f-set"><div class="f-h">设置</div></div>
				</div>
			</div>

			<div class="mark">UG爱好者论坛@EbuGogo</div>
		</main>
	</div>

	<svg class="ink" width="1716" height="966" viewBox="0 0 1716 966" fill="none" stroke="#ee1c25" stroke-width="2.6" stroke-linecap="round" stroke-linejoin="round">
		<path d="M498 -2C484 4 476 14 476 26C477 41 492 49 509 49C526 48 534 36 535 22C535 12 530 4 524 -2" />
		<path d="M514 12V45" />
		<path d="M549 304C530 310 517 324 515 340C517 354 536 364 562 370C580 373 597 376 601 372C607 362 606 348 597 335C590 322 574 312 549 310" />
		<path d="M549 316C562 316 572 317 570 321C562 330 552 333 553 335C566 338 579 341 578 348C574 356 548 354 534 352" />
		<path d="M567 594C580 589 590 591 592 593C578 596 569 604 567 622C569 636 586 648 610 655C630 657 644 654 646 637C642 622 625 606 605 595" />
		<path d="M628 624H567M584 606L567 623M596 607L607 643M596 607H603" stroke-width="2.4" />
		<path d="M1360 410C1340 402 1312 400 1300 410C1290 422 1292 438 1304 450C1320 462 1344 472 1368 473C1390 472 1410 466 1410 456C1404 442 1378 426 1360 420" />
		<path d="M1342 405C1352 408 1358 416 1358 428C1355 442 1342 450 1330 454C1345 457 1362 458 1380 458" />
	</svg>
</div>

<style>
	:global(body) { margin: 0; background: #fff; }

	.app {
		position: relative;
		width: 1716px;
		height: 966px;
		overflow: hidden;
		display: flex;
		flex-direction: column;
		font: 14px/20px "Noto Sans", "Noto Sans CJK SC", sans-serif;
		color: #222;
		background: #fff;
	}
	.defs { position: absolute; }
	.dim { filter: grayscale(1) opacity(0.5); }

	.toolbars { border-top: 2px solid #c9dad9; flex: none; }
	.tb {
		display: flex;
		align-items: center;
		height: 34px;
		box-sizing: border-box;
		border-bottom: 2px solid #e3e3e3;
		border-right: 1px solid #e8e8e8;
		background: #fff;
	}
	.tb4 {
		width: 100%;
		height: 35px;
		border-bottom-color: #a9b2b1;
		border-right: 0;
	}
	.cell { width: 31px; flex: none; display: flex; justify-content: center; }
	.cell svg { display: block; }
	.tb4 .cell { width: 23px; }
	.tb4 .cell svg { width: 20px; height: 20px; }
	.tb4 .fbox svg { width: 15px; height: 15px; }
	.caret { width: 12px; flex: none; display: flex; justify-content: center; }
	.sep { flex: none; height: 26px; position: relative; }
	.sep::after { content: ''; position: absolute; left: 50%; top: 0; bottom: 0; width: 1px; background: #dedede; }
	.grip { flex: none; height: 26px; background: radial-gradient(circle, #999 1px, transparent 1.2px) 50% 0 / 4px 4px repeat-y; border-left: 1px solid #e3e3e3; }
	.tri {
		display: inline-block;
		border: solid transparent;
		border-width: 4px 4px 0;
		border-top-color: #222;
	}
	.tri.small { border-width: 3px 3px 0; }
	.tri.pale { border-top-color: #aaa; border-width: 5px 5px 0; }
	.tb-txt { width: 25px; flex: none; font-size: 13.5px; white-space: nowrap; overflow: visible; }
	.tb-off { width: 57px; flex: none; font-size: 13px; color: #c4c4c4; white-space: nowrap; }
	.search {
		width: 141px;
		height: 21px;
		margin: 0 5px 0 11px;
		flex: none;
		box-sizing: border-box;
		border: 1px solid #b9b9b9;
		display: flex;
		align-items: center;
		justify-content: space-between;
		padding: 0 2px 0 3px;
		font-size: 14px;
	}
	.filter-combo {
		height: 23px;
		box-sizing: border-box;
		border: 1px solid #a8a8a8;
		display: flex;
		align-items: center;
		justify-content: space-between;
		padding: 0 6px 0 2px;
		color: #aaa;
		font-size: 13px;
		flex: none;
	}
	.filter-combo.first { width: 149px; justify-content: flex-end; border-left: 0; margin-right: 7px; }
	.filter-combo.second { width: 159px; }
	.fbox { width: 17px; height: 17px; border: 1px solid #c8342a; display: flex; align-items: center; justify-content: center; }

	.status { height: 24px; flex: none; margin-left: -3px; font-weight: 700; font-size: 13px; line-height: 22px; }

	.main { flex: 1; display: flex; min-height: 0; }

	.rail { width: 24px; flex: none; background: #dcdcdc; border-right: 1px solid #a8a8a8; box-sizing: border-box; overflow: hidden; }
	.slot { display: flex; align-items: center; justify-content: center; overflow: hidden; }
	.slot svg { flex: none; margin-left: -4px; }
	.slot:first-child svg { margin-left: -7px; }
	.slot.on { background: #fff; }

	.nav { width: 239px; flex: none; display: flex; flex-direction: column; padding-left: 6px; box-sizing: border-box; border-right: 2px solid #b8b8b8; }
	.nav-title { height: 29px; flex: none; line-height: 30px; font-size: 14px; padding-left: 4px; }
	.nav-table { height: 692px; flex: none; display: flex; flex-direction: column; border: solid #dcdcdc; border-width: 2px 0 0 2px; box-sizing: border-box; overflow: hidden; }
	.nav-head { height: 24px; flex: none; display: flex; background: #f3f3f3; border-bottom: 1px solid #ddd; line-height: 24px; }
	.nav-head .c-name { padding-left: 5px; }
	.nav-head .tri.up { border-width: 0 4px 5px; border-color: transparent transparent #222; margin-left: 19px; vertical-align: 2px; }
	.nav-head .c-new { white-space: nowrap; overflow: hidden; padding-left: 6px; }
	.c-name { width: 200px; flex: none; box-sizing: border-box; border-right: 1px solid #e6e6e6; display: flex; align-items: center; position: relative; white-space: nowrap; }
	.nav-head .c-name { display: block; }
	.c-new { flex: 1; display: flex; align-items: center; padding-left: 5px; overflow: hidden; }
	.nav-rows { flex: 1; overflow: hidden; }
	.nrow { display: flex; height: 24px; box-sizing: border-box; border-bottom: 1px solid #ececec; }
	.nrow:nth-child(even) { background: #f9f9f9; }
	.root { padding-left: 4px; }
	.root::before { content: ''; position: absolute; left: 9px; top: -12px; height: 24px; border-left: 1px dotted #999; }
	.nrow:first-child .root::before { top: 12px; height: 12px; }
	.nrow:nth-child(6) .root::before { height: 17px; }
	.root::after { content: ''; position: absolute; left: 9px; top: 11px; width: 9px; border-top: 1px dotted #999; }
	.tog { width: 11px; height: 11px; box-sizing: border-box; border: 1px solid #ccc; background: #fff; display: flex; align-items: center; justify-content: center; font-size: 11px; line-height: 9px; position: relative; z-index: 1; margin-right: 3px; flex: none; }
	.tog.none { visibility: hidden; }
	.r-tick { margin: 0 1px 0 1px; display: flex; position: relative; z-index: 1; }
	.r-ico { display: flex; margin-right: 3px; position: relative; z-index: 1; }
	.kid { padding-left: 40px; }
	.kid::before { content: ''; position: absolute; left: 29px; top: -1px; height: 24px; border-left: 1px dotted #999; }
	.kid.last::before { height: 12px; }
	.kid::after { content: ''; position: absolute; left: 29px; top: 11px; width: 10px; border-top: 1px dotted #999; }
	.cbox { width: 12px; height: 12px; border: 1px solid #222; background: #fff; display: flex; align-items: center; justify-content: center; flex: none; }
	.k-ico { display: flex; margin: 0 2px 0 1px; }
	.lbl { font-size: 14px; }
	.lbl.bold { font-weight: 700; }
	.hscroll { height: 20px; flex: none; display: flex; background: #f0f0f0; margin-top: 1px; }
	.sb-arrow { width: 21px; display: flex; align-items: center; justify-content: center; }
	.sb-thumb { width: 152px; background: #c8c8c8; }
	.splitter { height: 5px; flex: none; margin-top: 0; background: #e8e8e8; border: solid #c4c4c4; border-width: 1px 0; box-sizing: border-box; }
	.nav-sec { height: 26px; flex: none; box-sizing: border-box; border-bottom: 2px solid #d2d2d2; color: #3d94cc; font-size: 16px; line-height: 25px; padding-left: 7px; }

	.dialog { width: 365px; flex: none; display: flex; flex-direction: column; margin-top: -1px; box-sizing: border-box; border: solid #a8a8a8; border-width: 0 1px; background: #e8e8e8; }
	.d-title { height: 26px; flex: none; margin: 0 -1px; background: #5a8680; color: #fff; display: flex; align-items: center; padding: 0 10px 0 9px; gap: 6px; }
	.d-name { flex: 1; margin-left: 3px; font-size: 15px; }
	.d-btn { margin-left: 2px; }
	.d-body { flex: 1; padding: 4px 5px 0; display: flex; flex-direction: column; gap: 2px; }
	.sec { background: #fff; box-sizing: border-box; border-bottom: 2px solid #d3d3d3; flex: none; }
	.sec-h { height: 28px; display: flex; align-items: center; justify-content: space-between; padding: 0 6px 0 7px; color: #3d94cc; font-size: 16px; }
	.s1 { height: 153px; }
	.s2 { height: 297px; }
	.s3 { height: 171px; }
	.s4 { height: 75px; }
	.s5 { height: 27px; }
	.field { display: flex; align-items: center; justify-content: space-between; font-size: 14px; }

	.study { margin: 4px 10px 0 9px; height: 82px; box-sizing: border-box; border: 1px solid #d8d8d8; padding: 1px; overflow: hidden; }
	.study-row { display: grid; grid-template-columns: 159px 1fr; height: 24px; border-bottom: 1px solid #ececec; box-sizing: border-box; }
	.study-row > div { border-right: 1px solid #ececec; line-height: 25px; }
	.study-row.head { background: #f2f2f2; border-bottom-color: #ddd; font-size: 14px; }
	.study-row.head > div:first-child { padding-left: 6px; }
	.study-row.alt { background: #f9f9f9; }
	.sel { background: #3399ff; color: #fff; padding-left: 4px; }
	.name-field { height: 32px; margin: 0 10px 0 9px; }
	.input { width: 91px; height: 25px; box-sizing: border-box; border: 1px solid #aaa; padding-left: 5px; line-height: 23px; }

	.tabs { display: flex; align-items: flex-end; margin: 4px 0 0 9px; height: 33px; position: relative; z-index: 1; }
	.tab { height: 31px; width: 58px; box-sizing: border-box; background: #e6e6e6; border: solid #d6d6d6; border-width: 1px 1px 1px 0; text-align: center; line-height: 30px; font-size: 14px; }
	.tab.on { width: 61px; height: 34px; background: #fff; color: #3d94cc; border: 1px solid #c8c8c8; border-bottom: 0; line-height: 35px; padding-left: 3px; }
	.panel { margin: -1px 10px 0 9px; height: 223px; box-sizing: border-box; border: 1px solid #c8c8c8; padding: 5px 5px 0 6px; }
	.p-row { height: 28px; }
	.combo { width: 152px; height: 28px; box-sizing: border-box; border: 1px solid #a9a9a9; background: #fff; display: flex; align-items: center; justify-content: space-between; padding: 0 6px 0 4px; font-size: 14px; }
	.goals { margin-top: 3px; height: 116px; box-sizing: border-box; border: 1px solid #dcdcdc; overflow: hidden; }
	.g-row { display: grid; grid-template-columns: 80px 40px 150px 40px 1fr; height: 24px; box-sizing: border-box; border-bottom: 1px solid #ececec; font-size: 14px; line-height: 24px; }
	.g-row > div { border-right: 1px solid #ececec; padding-left: 7px; white-space: nowrap; }
	.g-head { background: #f3f3f3; border-bottom-color: #ccc; }
	.g-row.alt { background: #f9f9f9; }
	.panel > .p-row:nth-child(3) { margin-top: 2px; }
	.pick { margin-top: 4px; }
	.pick-btn { width: 29px; height: 28px; box-sizing: border-box; border: 1px dotted #777; display: flex; align-items: center; justify-content: center; }
	.pick-in { width: 18px; height: 19px; box-sizing: border-box; border: 1px solid #5a58c8; display: flex; flex-direction: column; align-items: center; font-size: 7px; line-height: 8px; color: #30209a; }
	.pick-in b { font-weight: 700; }

	.alg { height: 28px; margin: 5px 10px 0 9px; }
	.group { margin: 2px 10px 0 9px; background: #f0f5f6; border: 1px solid #d9e1e2; box-sizing: border-box; height: 27px; }
	.group.open { height: 70px; }
	.g-title { height: 26px; display: flex; align-items: center; justify-content: space-between; padding: 0 6px 0 8px; color: #3d94cc; font-size: 14px; }
	.speed { margin: 7px 8px 0; height: 28px; }

	.run { margin: 5px 10px 0 9px; color: #999; }
	.run-btn { width: 32px; height: 32px; box-sizing: border-box; border: 1px solid #ccc; display: flex; align-items: center; justify-content: center; }

	.d-foot { display: flex; justify-content: flex-end; padding: 8px 11px 0 0; }
	.close { width: 58px; height: 28px; box-sizing: border-box; background: #90c6e4; border: 1px solid #4c9fd1; font: inherit; color: #222; padding: 0; }

	.view { flex: 1; position: relative; background: linear-gradient(#b6b7b9 0, #e7e9eb 78%); overflow: hidden; }
	.model { position: absolute; left: 0; top: 0; }
	.finder { position: absolute; left: 661px; top: 86px; width: 520px; height: 626px; background: #e8e8e8; box-sizing: border-box; border: solid #a8a8a8; border-width: 0 0 1px 1px; }
	.f-title { height: 32px; margin-left: -1px; background: #5a8680; color: #fff; display: flex; align-items: center; gap: 8px; padding-left: 8px; font-size: 14px; }
	.f-body { padding-left: 5px; display: flex; flex-direction: column; gap: 4px; }
	.f-sec { background: #fff; box-sizing: border-box; border-bottom: 2px solid #d3d3d3; padding-left: 9px; }
	.f-h { color: #3d94cc; font-size: 16px; line-height: 26px; padding-left: 0; }
	.f-search { height: 68px; }
	.f-search .f-h { margin-left: -2px; }
	.f-input { height: 27px; margin-top: 6px; box-sizing: border-box; border: 1px solid #aaa; padding-left: 4px; line-height: 25px; font-size: 14px; }
	.f-list { height: 440px; }
	.f-list .f-h { margin-left: -2px; }
	.f-box { height: 399px; margin-top: 5px; box-sizing: border-box; border: 1px solid #d8d8d8; padding-top: 9px; overflow: hidden; }
	.res { display: flex; margin-bottom: 10px; white-space: nowrap; }
	.res-ico { width: 37px; flex: none; padding-left: 11px; box-sizing: border-box; }
	.res-t { font-weight: 700; line-height: 22px; margin-bottom: 3px; }
	.res-l { line-height: 20px; font-size: 14px; }
	.f-set { height: 26px; }
	.f-set .f-h { margin-left: -2px; }

	.mark { position: absolute; right: 3px; bottom: 6px; color: #9a9c9e; font: 14px "Liberation Mono", "Noto Sans CJK SC", monospace; letter-spacing: 0.4px; }

	.ink { position: absolute; left: 0; top: 0; pointer-events: none; }
</style>
